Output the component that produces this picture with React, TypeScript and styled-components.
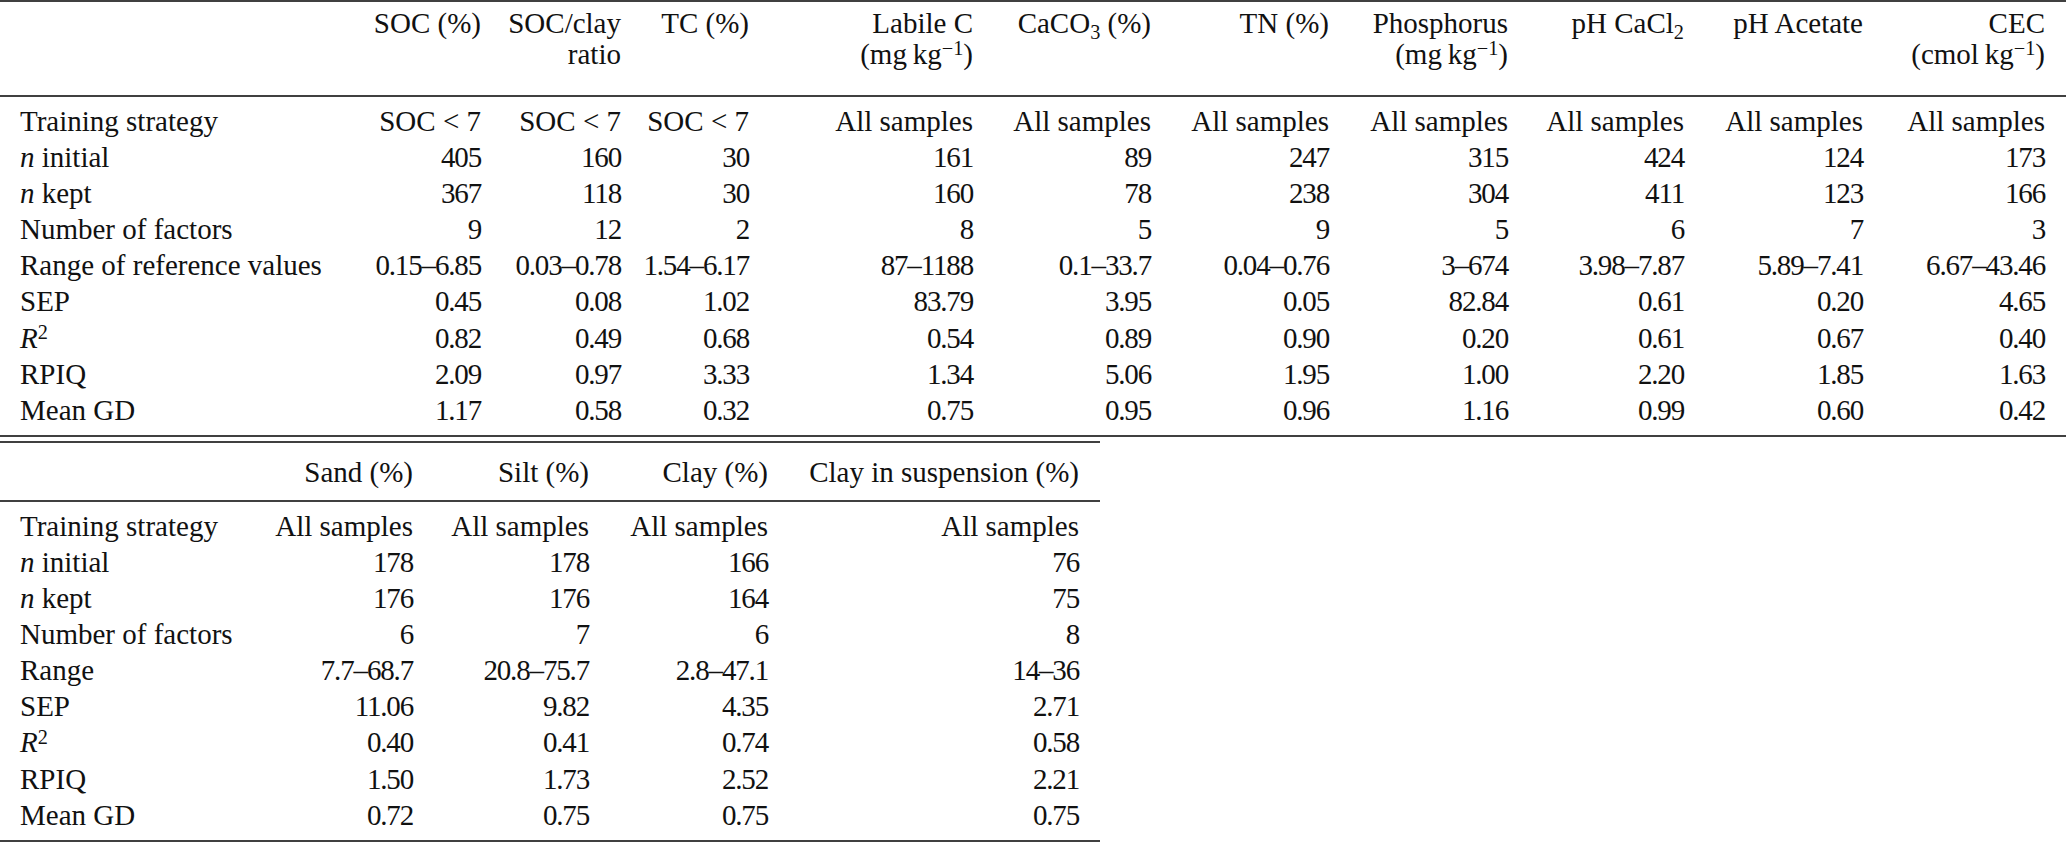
import React from "react";
import styled, { createGlobalStyle } from "styled-components";

const GlobalStyle = createGlobalStyle`
  html, body {
    margin: 0;
    padding: 0;
    background: #ffffff;
  }
  body {
    font-family: "Liberation Serif", "Times New Roman", serif;
    color: #111111;
  }
`;

const Page = styled.div`
  display: flex;
  flex-direction: column;
  align-items: flex-start;
  gap: 4px;
  width: 2067px;
`;

const Table = styled.table<{ $width: number }>`
  width: ${(p) => p.$width}px;
  table-layout: fixed;
  border-collapse: separate;
  border-spacing: 0;
  border-top: 2px solid #404040;
  border-bottom: 2px solid #404040;
  font-size: 29px;
`;

const HeadCell = styled.th<{ $padTop: number; $padBottom: number }>`
  font-weight: normal;
  text-align: right;
  vertical-align: top;
  line-height: 31px;
  padding: ${(p) => p.$padTop}px 10px ${(p) => p.$padBottom}px 0;
  border-bottom: 2px solid #404040;
  white-space: nowrap;

  &:last-child {
    padding-right: 21px;
  }
`;

const BodyRow = styled.tr`
  &:first-child td {
    padding-top: 6px;
  }
  &:last-child td {
    padding-bottom: 7px;
  }
`;

const LabelCell = styled.td`
  text-align: left;
  line-height: 36.1px;
  padding: 0 0 0 20px;
  white-space: nowrap;
`;

const ValueCell = styled.td<{ $tight: boolean }>`
  text-align: right;
  line-height: 36.1px;
  padding: 0 10px 0 0;
  white-space: nowrap;
  letter-spacing: ${(p) => (p.$tight ? "-0.04em" : "normal")};

  &:last-child {
    padding-right: 21px;
  }
`;

const Sub = styled.sub`
  font-size: 0.7em;
  line-height: 0;
  vertical-align: baseline;
  position: relative;
  top: 0.28em;
`;

const Sup = styled.sup`
  font-size: 0.7em;
  line-height: 0;
  vertical-align: baseline;
  position: relative;
  top: -0.42em;
`;

const Ital = styled.i`
  font-style: italic;
`;

const perKg = (unit: string) => (
  <>
    ({unit}
    {"\u2009"}kg<Sup>−1</Sup>)
  </>
);

const labels: React.ReactNode[] = [
  "Training strategy",
  <>
    <Ital>n</Ital> initial
  </>,
  <>
    <Ital>n</Ital> kept
  </>,
  "Number of factors",
  "Range of reference values",
  "SEP",
  <>
    <Ital>R</Ital>
    <Sup>2</Sup>
  </>,
  "RPIQ",
  "Mean GD",
];

const labels2: React.ReactNode[] = labels.map((l, i) => (i === 4 ? "Range" : l));

const cols1 = [330, 161, 140, 128, 224, 178, 178, 179, 176, 179, 193];

const heads1: React.ReactNode[] = [
  "SOC (%)",
  <>
    SOC/clay
    <br />
    ratio
  </>,
  "TC (%)",
  <>
    Labile C
    <br />
    {perKg("mg")}
  </>,
  <>
    CaCO<Sub>3</Sub> (%)
  </>,
  "TN (%)",
  <>
    Phosphorus
    <br />
    {perKg("mg")}
  </>,
  <>
    pH CaCl<Sub>2</Sub>
  </>,
  "pH Acetate",
  <>
    CEC
    <br />
    {perKg("cmol")}
  </>,
];

const all = "All samples";
const soc = "SOC < 7";

// one array per column: strategy, n initial, n kept, factors, range, SEP, R2, RPIQ, GD
const data1: string[][] = [
  [soc, "405", "367", "9", "0.15–6.85", "0.45", "0.82", "2.09", "1.17"],
  [soc, "160", "118", "12", "0.03–0.78", "0.08", "0.49", "0.97", "0.58"],
  [soc, "30", "30", "2", "1.54–6.17", "1.02", "0.68", "3.33", "0.32"],
  [all, "161", "160", "8", "87–1188", "83.79", "0.54", "1.34", "0.75"],
  [all, "89", "78", "5", "0.1–33.7", "3.95", "0.89", "5.06", "0.95"],
  [all, "247", "238", "9", "0.04–0.76", "0.05", "0.90", "1.95", "0.96"],
  [all, "315", "304", "5", "3–674", "82.84", "0.20", "1.00", "1.16"],
  [all, "424", "411", "6", "3.98–7.87", "0.61", "0.61", "2.20", "0.99"],
  [all, "124", "123", "7", "5.89–7.41", "0.20", "0.67", "1.85", "0.60"],
  [all, "173", "166", "3", "6.67–43.46", "4.65", "0.40", "1.63", "0.42"],
];

const cols2 = [250, 173, 176, 179, 322];

const heads2: React.ReactNode[] = [
  "Sand (%)",
  "Silt (%)",
  "Clay (%)",
  "Clay in suspension (%)",
];

const data2: string[][] = [
  [all, "178", "176", "6", "7.7–68.7", "11.06", "0.40", "1.50", "0.72"],
  [all, "178", "176", "7", "20.8–75.7", "9.82", "0.41", "1.73", "0.75"],
  [all, "166", "164", "6", "2.8–47.1", "4.35", "0.74", "2.52", "0.75"],
  [all, "76", "75", "8", "14–36", "2.71", "0.58", "2.21", "0.75"],
];

const isNumeric = (v: string) => /^[\d.–]+$/.test(v);

interface StatsTableProps {
  widths: number[];
  heads: React.ReactNode[];
  rowLabels: React.ReactNode[];
  columns: string[][];
  headTop: number;
  headBottom: number;
}

const StatsTable: React.FC<StatsTableProps> = ({
  widths,
  heads,
  rowLabels,
  columns,
  headTop,
  headBottom,
}) => {
  const total = widths.reduce((a, b) => a + b, 0);
  return (
    <Table $width={total}>
      <colgroup>
        {widths.map((w, i) => (
          <col key={i} style={{ width: w }} />
        ))}
      </colgroup>
      <thead>
        <tr>
          <HeadCell $padTop={headTop} $padBottom={headBottom} />
          {heads.map((h, i) => (
            <HeadCell key={i} $padTop={headTop} $padBottom={headBottom}>
              {h}
            </HeadCell>
          ))}
        </tr>
      </thead>
      <tbody>
        {rowLabels.map((label, r) => (
          <BodyRow key={r}>
            <LabelCell>{label}</LabelCell>
            {columns.map((col, c) => (
              <ValueCell key={c} $tight={isNumeric(col[r])}>
                {col[r]}
              </ValueCell>
            ))}
          </BodyRow>
        ))}
      </tbody>
    </Table>
  );
};

export default function App() {
  return (
    <>
      <GlobalStyle />
      <Page>
        <StatsTable
          widths={cols1}
          heads={heads1}
          rowLabels={labels}
          columns={data1}
          headTop={6}
          headBottom={25}
        />
        <StatsTable
          widths={cols2}
          heads={heads2}
          rowLabels={labels2}
          columns={data2}
          headTop={14}
          headBottom={12}
        />
      </Page>
    </>
  );
}
